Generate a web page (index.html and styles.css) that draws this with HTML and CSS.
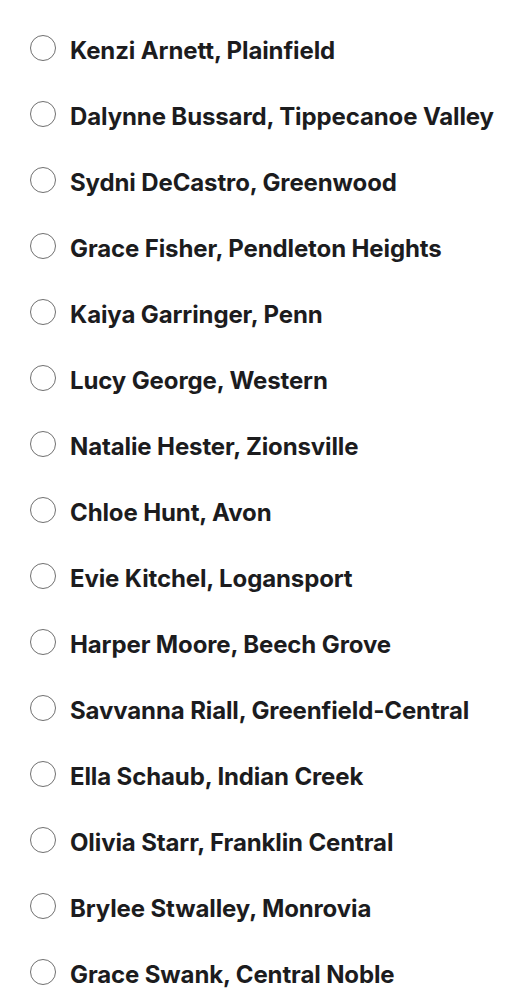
FILE: index.html
```html
<!DOCTYPE html>
<html lang="en">
<head>
  <meta charset="UTF-8">
  <title>Vote</title>
  <link rel="stylesheet" href="styles.css">
</head>
<body>

<form class="poll">
  <label class="option"><input type="radio" name="pick"><span class="ring"></span><span class="name">Kenzi Arnett, Plainfield</span></label>
  <label class="option"><input type="radio" name="pick"><span class="ring"></span><span class="name">Dalynne Bussard, Tippecanoe Valley</span></label>
  <label class="option"><input type="radio" name="pick"><span class="ring"></span><span class="name">Sydni DeCastro, Greenwood</span></label>
  <label class="option"><input type="radio" name="pick"><span class="ring"></span><span class="name">Grace Fisher, Pendleton Heights</span></label>
  <label class="option"><input type="radio" name="pick"><span class="ring"></span><span class="name">Kaiya Garringer, Penn</span></label>
  <label class="option"><input type="radio" name="pick"><span class="ring"></span><span class="name">Lucy George, Western</span></label>
  <label class="option"><input type="radio" name="pick"><span class="ring"></span><span class="name">Natalie Hester, Zionsville</span></label>
  <label class="option"><input type="radio" name="pick"><span class="ring"></span><span class="name">Chloe Hunt, Avon</span></label>
  <label class="option"><input type="radio" name="pick"><span class="ring"></span><span class="name">Evie Kitchel, Logansport</span></label>
  <label class="option"><input type="radio" name="pick"><span class="ring"></span><span class="name">Harper Moore, Beech Grove</span></label>
  <label class="option"><input type="radio" name="pick"><span class="ring"></span><span class="name">Savvanna Riall, Greenfield-Central</span></label>
  <label class="option"><input type="radio" name="pick"><span class="ring"></span><span class="name">Ella Schaub, Indian Creek</span></label>
  <label class="option"><input type="radio" name="pick"><span class="ring"></span><span class="name">Olivia Starr, Franklin Central</span></label>
  <label class="option"><input type="radio" name="pick"><span class="ring"></span><span class="name">Brylee Stwalley, Monrovia</span></label>
  <label class="option"><input type="radio" name="pick"><span class="ring"></span><span class="name">Grace Swank, Central Noble</span></label>
</form>

</body>
</html>
```

FILE: styles.css
```css
body {
  margin: 0;
  background: #fff;
  font-family: Inter, "Liberation Sans", sans-serif;
  color: #1c1c1e;
}

.poll {
  display: flex;
  flex-direction: column;
  padding: 17px 0 0 30px;
}

.option {
  display: flex;
  align-items: center;
  gap: 14px;
  height: 66px;
  cursor: pointer;
}

.option input {
  display: none;
}

.ring {
  width: 26px;
  height: 26px;
  margin-top: -4px;
  border: 1px solid #707070;
  border-radius: 50%;
  box-sizing: border-box;
  flex-shrink: 0;
}

.name {
  font-size: 24px;
  font-weight: 700;
  letter-spacing: -0.12px;
}
```
